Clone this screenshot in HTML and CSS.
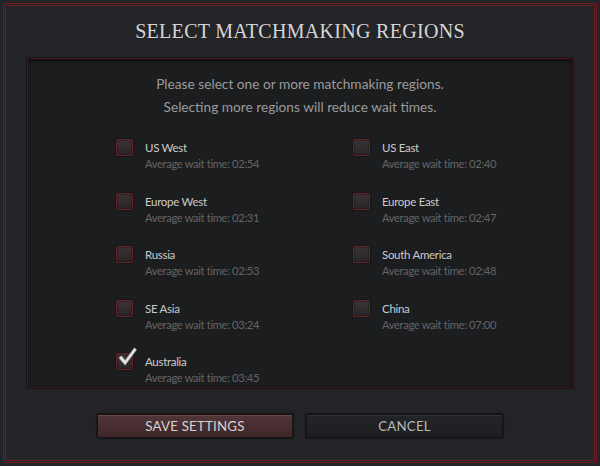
FILE: index.html
```html
<!DOCTYPE html>
<html>
<head>
<meta charset="utf-8">
<link rel="stylesheet" href="styles.css">
</head>
<body>
<div class="dialog">
  <div class="frame">
    <h1 class="title">Select Matchmaking Regions</h1>
    <div class="panel">
      <p class="intro">Please select one or more matchmaking regions.<br>Selecting more regions will reduce wait times.</p>
      <div class="regions">
        <div class="region"><span class="box"></span><div class="info"><div class="name">US West</div><div class="wait">Average wait time: 02:54</div></div></div>
        <div class="region"><span class="box"></span><div class="info"><div class="name">US East</div><div class="wait">Average wait time: 02:40</div></div></div>
        <div class="region"><span class="box"></span><div class="info"><div class="name">Europe West</div><div class="wait">Average wait time: 02:31</div></div></div>
        <div class="region"><span class="box"></span><div class="info"><div class="name">Europe East</div><div class="wait">Average wait time: 02:47</div></div></div>
        <div class="region"><span class="box"></span><div class="info"><div class="name">Russia</div><div class="wait">Average wait time: 02:53</div></div></div>
        <div class="region"><span class="box"></span><div class="info"><div class="name">South America</div><div class="wait">Average wait time: 02:48</div></div></div>
        <div class="region"><span class="box"></span><div class="info"><div class="name">SE Asia</div><div class="wait">Average wait time: 03:24</div></div></div>
        <div class="region"><span class="box"></span><div class="info"><div class="name">China</div><div class="wait">Average wait time: 07:00</div></div></div>
        <div class="region"><span class="box checked"><svg class="check" viewBox="0 0 24 24" width="22" height="22"><path d="M3 13 L6 10.5 L10 15.5 L20 2 L22.5 4 L10 21 Z" fill="#e2e2e2" stroke="#8a8a8a" stroke-width="0.6"/></svg></span><div class="info"><div class="name">Australia</div><div class="wait">Average wait time: 03:45</div></div></div>
      </div>
    </div>
    <div class="buttons">
      <button class="btn btn-save">SAVE SETTINGS</button>
      <button class="btn btn-cancel">CANCEL</button>
    </div>
  </div>
</div>
</body>
</html>
```
FILE: styles.css
```css
html, body {
  margin: 0;
  padding: 0;
  background: #1a1b1d;
}
.dialog {
  width: 600px;
  height: 466px;
  box-sizing: border-box;
  padding: 3px;
  background: #232428;
}
.frame {
  height: 100%;
  box-sizing: border-box;
  border: 3px double #6a1e22;
  display: flex;
  flex-direction: column;
}
.title {
  margin: 0;
  height: 52px;
  line-height: 50px;
  text-align: center;
  font-family: "Liberation Serif", "DejaVu Serif", serif;
  font-weight: normal;
  font-size: 20px;
  letter-spacing: 0.3px;
  text-transform: uppercase;
  color: #d6d6d6;
}
.panel {
  margin: 0 21px;
  height: 330px;
  box-sizing: border-box;
  background: #1c1d1f;
  border-top: 1px solid #4e1a1d;
  border-left: 1px solid #4e1a1d;
  border-right: 1px solid #3a1517;
  border-bottom: 1px solid #3a1517;
  box-shadow: inset 0 2px 4px rgba(0,0,0,0.6), 0 0 0 1px #141516;
  padding-top: 13px;
  overflow: hidden;
}
.intro {
  margin: 0;
  text-align: center;
  font-family: "Lato", "Open Sans", sans-serif;
  font-size: 13.7px;
  line-height: 23px;
  color: #9b9b9b;
}
.regions {
  margin-top: 22px;
  padding-left: 88px;
  display: grid;
  grid-template-columns: 237px 1fr;
  grid-auto-rows: 53.5px;
}
.region {
  display: flex;
  align-items: flex-start;
  gap: 12px;
}
.box {
  position: relative;
  flex: none;
  width: 17px;
  height: 17px;
  box-sizing: border-box;
  margin-top: -1px;
  border: 1px solid #6a2226;
  border-radius: 2px;
  background: linear-gradient(#3b3335, #2b2527);
  box-shadow: inset 0 0 2px rgba(0,0,0,0.8), 0 0 2px rgba(0,0,0,0.9);
}
.check {
  position: absolute;
  left: -1px;
  top: -8px;
}
.info {
  font-family: "Lato", "Open Sans", sans-serif;
}
.name {
  font-size: 11.5px;
  letter-spacing: -0.3px;
  line-height: 16px;
  color: #cbcbcb;
}
.wait {
  font-size: 11.2px;
  letter-spacing: -0.35px;
  line-height: 16px;
  color: #646464;
}
.buttons {
  margin-top: 26px;
  display: flex;
  justify-content: center;
  gap: 13px;
}
.btn {
  width: 196px;
  height: 24px;
  box-sizing: border-box;
  font-family: "Lato", "Open Sans", sans-serif;
  font-size: 13.3px;
  letter-spacing: 0.2px;
  padding: 0;
  cursor: pointer;
}
.btn-save {
  color: #d4d4d4;
  border: 1px solid #1a1112;
  background: linear-gradient(#523538, #3e2729);
  box-shadow: inset 0 1px 0 #654547, 0 0 2px #000;
}
.btn-cancel {
  width: 197px;
  color: #b8b8b8;
  border: 1px solid #111213;
  background: linear-gradient(#242528, #1c1d1f);
  box-shadow: inset 0 1px 0 #313236, 0 0 2px #000;
}
```
